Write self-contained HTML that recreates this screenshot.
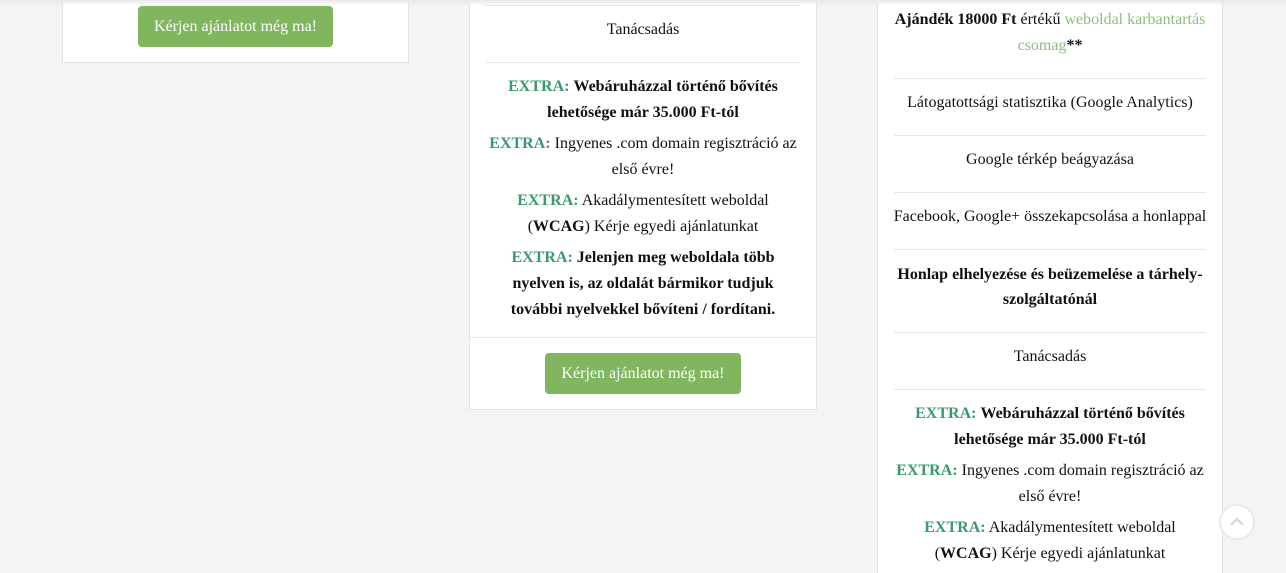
<!DOCTYPE html><html><head><meta charset="utf-8"><style>
html,body{margin:0;width:1286px;height:573px;overflow:hidden}
body{background:#f4f4f4;font-family:"Liberation Serif",serif;font-size:16px;color:#111;position:relative}
.card{position:absolute;background:#fff;border:1px solid #e3e3e3;box-sizing:border-box}
.l{position:absolute;left:0;right:0;text-align:center;line-height:26px}
.hr{position:absolute;height:1px;background:#e6e6e6}
.g{color:#3a9a6c;font-weight:bold}
.lk{color:#8cc07a}
.btn{position:absolute;background:#80b65e;color:#fff;border-radius:4px;text-align:center;line-height:41px;font-size:16px}
.top{position:absolute;left:0;top:0;width:1286px;height:6px;background:linear-gradient(#e8e8e8,rgba(244,244,244,0))}
</style></head><body>
<div class="card" style="left:62px;top:-2px;width:347px;height:65px">
<div class="btn" style="left:75px;top:7px;width:195px;height:41px">Kérjen ajánlatot még ma!</div></div>

<div class="card" style="left:469px;top:-2px;width:348px;height:412px">
<div class="hr" style="left:16px;right:16px;top:6px"></div>
<div class="l" style="top:18px">Tanácsadás</div>
<div class="hr" style="left:16px;right:16px;top:63px"></div>
<div class="l" style="top:75px"><span class="g">EXTRA:</span> <b>Webáruházzal történő bővítés</b></div>
<div class="l" style="top:101px"><b>lehetősége már 35.000 Ft-tól</b></div>
<div class="l" style="top:132px"><span class="g">EXTRA:</span> Ingyenes .com domain regisztráció az</div>
<div class="l" style="top:158px">első évre!</div>
<div class="l" style="top:189px"><span class="g">EXTRA:</span> Akadálymentesített weboldal</div>
<div class="l" style="top:215px">(<b>WCAG</b>) Kérje egyedi ajánlatunkat</div>
<div class="l" style="top:246px"><span class="g">EXTRA:</span> <b>Jelenjen meg weboldala több</b></div>
<div class="l" style="top:272px"><b>nyelven is, az oldalát bármikor tudjuk</b></div>
<div class="l" style="top:298px"><b>további nyelvekkel bővíteni / fordítani.</b></div>
<div class="hr" style="left:0;right:0;top:338px"></div>
<div class="btn" style="left:75px;top:354px;width:196px;height:41px">Kérjen ajánlatot még ma!</div>
</div>

<div class="card" style="left:877px;top:-2px;width:346px;height:580px">
<div class="l" style="top:8px"><b>Ajándék 18000 Ft</b> értékű <span class="lk">weboldal karbantartás</span></div>
<div class="l" style="top:34px"><span class="lk">csomag</span><b>**</b></div>
<div class="hr" style="left:16px;right:16px;top:79px"></div>
<div class="l" style="top:91px">Látogatottsági statisztika (Google Analytics)</div>
<div class="hr" style="left:16px;right:16px;top:136px"></div>
<div class="l" style="top:148px">Google térkép beágyazása</div>
<div class="hr" style="left:16px;right:16px;top:193px"></div>
<div class="l" style="top:205px">Facebook, Google+ összekapcsolása a honlappal</div>
<div class="hr" style="left:16px;right:16px;top:250px"></div>
<div class="l" style="top:263px"><b>Honlap elhelyezése és beüzemelése a tárhely-</b></div>
<div class="l" style="top:288px"><b>szolgáltatónál</b></div>
<div class="hr" style="left:16px;right:16px;top:333px"></div>
<div class="l" style="top:345px">Tanácsadás</div>
<div class="hr" style="left:16px;right:16px;top:390px"></div>
<div class="l" style="top:402px"><span class="g">EXTRA:</span> <b>Webáruházzal történő bővítés</b></div>
<div class="l" style="top:428px"><b>lehetősége már 35.000 Ft-tól</b></div>
<div class="l" style="top:459px"><span class="g">EXTRA:</span> Ingyenes .com domain regisztráció az</div>
<div class="l" style="top:485px">első évre!</div>
<div class="l" style="top:516px"><span class="g">EXTRA:</span> Akadálymentesített weboldal</div>
<div class="l" style="top:542px">(<b>WCAG</b>) Kérje egyedi ajánlatunkat</div>
</div>
<div class="top"></div>
<div style="position:absolute;left:1219px;top:504px;width:36px;height:36px;border:2px solid #e9e9e9;border-radius:50%;box-sizing:border-box;background:#fff"><svg width="32" height="32" viewBox="0 0 32 32" style="position:absolute;left:0;top:0"><path d="M10 19 L16 13 L22 19" fill="none" stroke="#d6dbe0" stroke-width="2.5"/></svg></div>
</body></html>
